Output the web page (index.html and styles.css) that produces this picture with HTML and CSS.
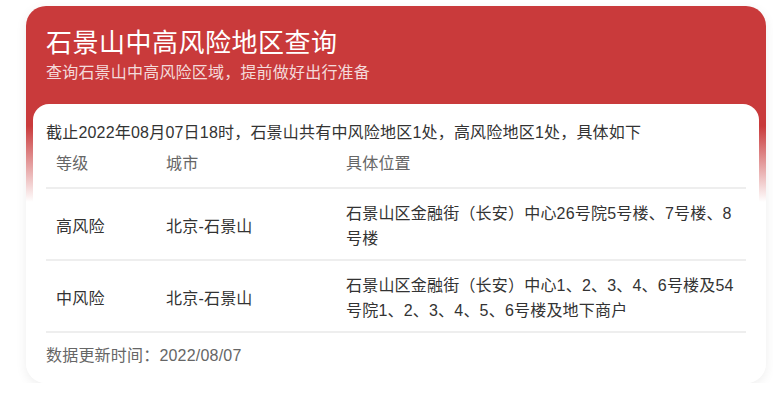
FILE: index.html
```html
<!DOCTYPE html>
<html lang="zh-CN">
<head>
<meta charset="utf-8">
<title>石景山中高风险地区查询</title>
<link rel="stylesheet" href="styles.css">
</head>
<body>
<div class="card">
  <div class="head">
    <h1 class="title">石景山中高风险地区查询</h1>
    <p class="sub">查询石景山中高风险区域，提前做好出行准备</p>
  </div>
  <div class="inner">
    <p class="intro">截止2022年08月07日18时，石景山共有中风险地区1处，高风险地区1处，具体如下</p>
    <table class="tbl">
      <thead>
        <tr><th class="c1">等级</th><th class="c2">城市</th><th class="c3">具体位置</th></tr>
      </thead>
      <tbody>
        <tr><td>高风险</td><td>北京-石景山</td><td>石景山区金融街（长安）中心26号院5号楼、7号楼、8号楼</td></tr>
        <tr><td>中风险</td><td>北京-石景山</td><td>石景山区金融街（长安）中心1、2、3、4、6号楼及54号院1、2、3、4、5、6号楼及地下商户</td></tr>
      </tbody>
    </table>
    <p class="foot">数据更新时间：2022/08/07</p>
  </div>
</div>
</body>
</html>
```
FILE: styles.css
```css
* { box-sizing: border-box; }
body {
  margin: 0;
  background: #fff;
  font-family: "Liberation Sans", "Noto Sans CJK SC", sans-serif;
  color: #333;
  letter-spacing: 0.2px;
}
.card {
  width: 740px;
  margin: 6px 0 0 26px;
  border-radius: 20px;
  padding: 0 7px 0 7px;
  background: linear-gradient(to bottom, #c93a3b 0, #c93a3b 120px, #ffffff 196px, #ffffff 100%);
  box-shadow: 0 3px 12px rgba(0, 0, 0, 0.07);
}
.head {
  padding: 20px 13px 0;
}
.title {
  margin: 0;
  font-size: 26px;
  line-height: 34px;
  font-weight: normal;
  color: #fff;
  letter-spacing: 0.5px;
}
.sub {
  margin: 2px 0 0;
  font-size: 16px;
  line-height: 22px;
  color: rgba(255, 255, 255, 0.82);
}
.inner {
  margin-top: 20px;
  background: #fff;
  border-radius: 16px;
  padding: 17px 13px 15px;
}
.intro {
  margin: 0;
  font-size: 16px;
  line-height: 24px;
  color: #333;
}
.tbl {
  width: 100%;
  border-collapse: collapse;
  font-size: 16px;
  table-layout: fixed;
}
.tbl th {
  text-align: left;
  font-weight: normal;
  color: #666;
  line-height: 24px;
  padding: 7px 10px 11px;
  border-bottom: 2px solid #eeeeee;
}
.c1 { width: 110px; }
.c2 { width: 180px; }
.tbl td {
  padding: 12px 10px 8px;
  line-height: 25px;
  vertical-align: middle;
  color: #333;
  border-bottom: 2px solid #eeeeee;
}
.foot {
  margin: 11px 0 0;
  font-size: 16px;
  line-height: 24px;
  color: #666;
}
```
